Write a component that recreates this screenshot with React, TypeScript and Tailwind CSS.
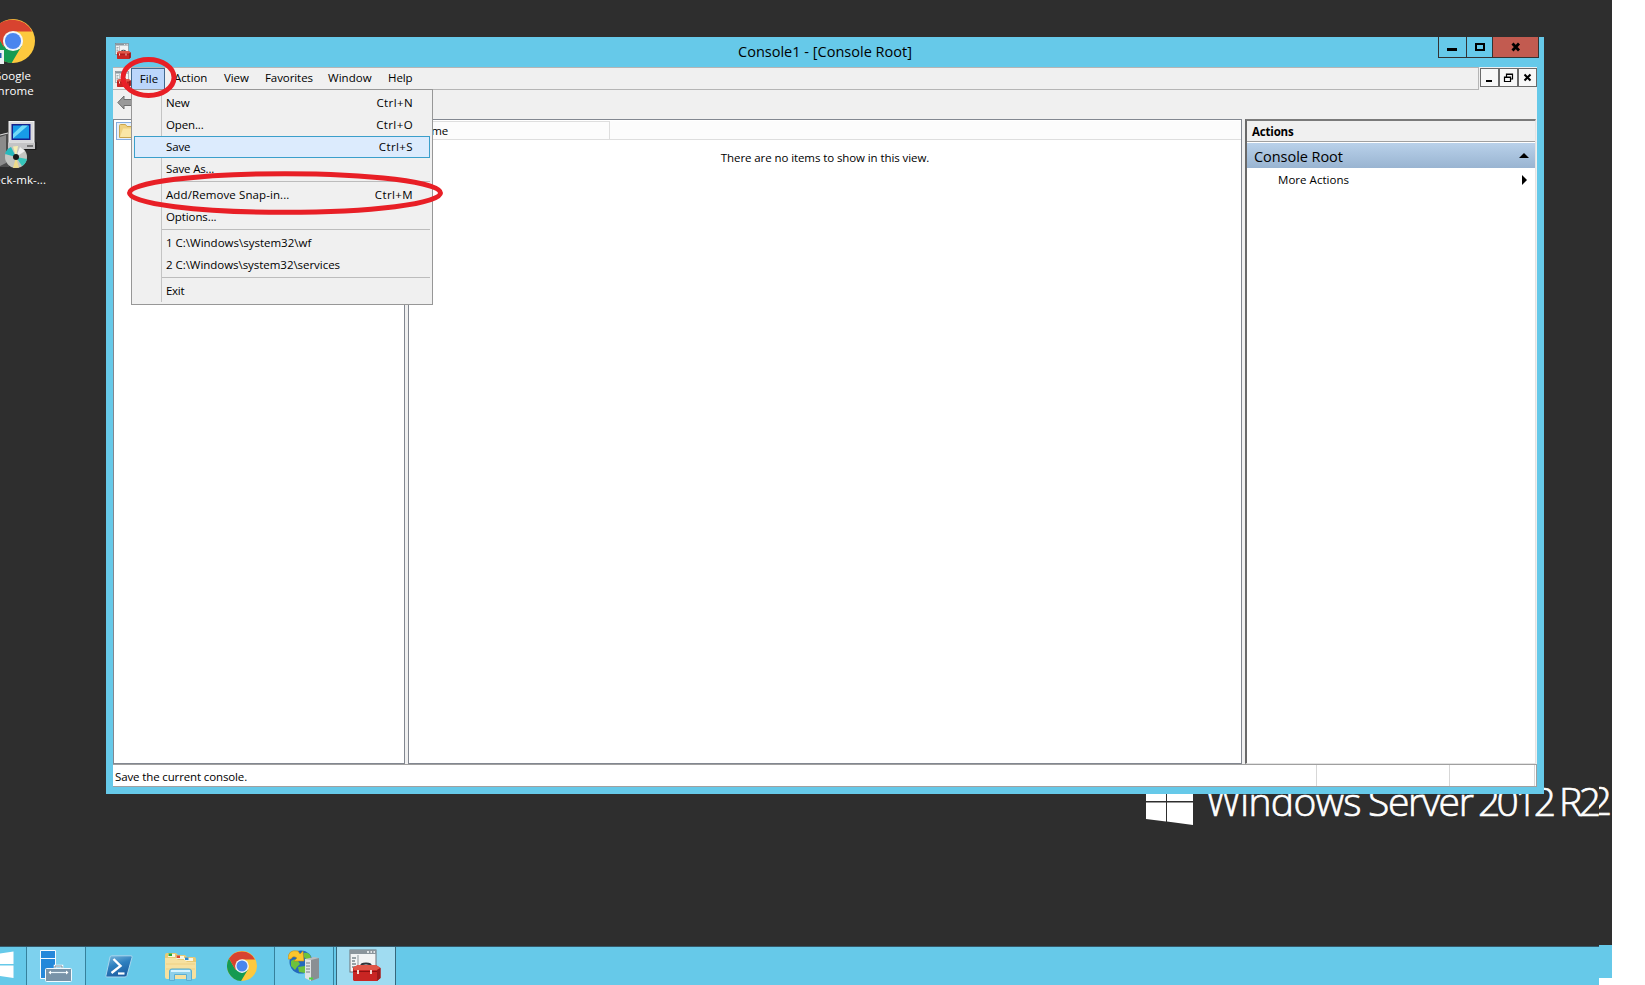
import React from "react";

function ChromeIcon({ className }: { className: string }) {
  return (
    <svg viewBox="0 0 48 48" className={className}>
      <circle cx="24" cy="24" r="24" fill="#fdc93e" />
      <path d="M3.2 12A24 24 0 0 0 22.5 48L33.5 29.5 24 24 13.8 30Z" fill="#159a52" />
      <path d="M3.2 12 13.6 30 24 24 24 13.5H44.8A24 24 0 0 0 3.2 12Z" fill="#d8432f" />
      <circle cx="24" cy="24" r="11" fill="#f4f6f8" />
      <circle cx="24" cy="24" r="8.8" fill="#4a86ee" />
    </svg>
  );
}

function InstallerIcon() {
  return (
    <svg viewBox="0 0 37 48" className="h-12 w-[37px]">
      <path d="M0 14 4 12H9V46H0Z" fill="#4d4d4d" />
      <path d="M0 16 6 14V42L0 45Z" fill="#8b8b8b" />
      <path d="M0 14 8 12" stroke="#dedede" strokeWidth="1" />
      <rect x="9" y="0.5" width="25" height="21" fill="#d9d9dc" stroke="#f4f4f4" />
      <rect x="11.5" y="3" width="19" height="16" fill="#14208c" />
      <rect x="13" y="4.5" width="16" height="13" fill="#179be8" />
      <path d="M13 17.5V13L22 4.500H28Z" fill="#72dcf8" />
      <path d="M8 21.500H35V28H8Z" fill="#c4c4c6" />
      <path d="M27 25H33" stroke="#222" strokeWidth="1" />
      <path d="M36 21V28.500H20" stroke="#161616" fill="none" />
      <circle cx="16" cy="36" r="11" fill="#c3c5c1" />
      <path d="M16 36 5 33A11 11 0 0 1 11 26Z" fill="#26b9bd" />
      <path d="M16 36 27 38A11 11 0 0 1 22 45Z" fill="#36c5bb" />
      <path d="M16 36 13 25.500 18 25Z" fill="#f5eeb2" />
      <path d="M16 36 19 46.700 13 47Z" fill="#eedb8b" />
      <path d="M16 36 20 26 25 30Z" fill="#eeeeee" />
      <circle cx="16" cy="36" r="3" fill="#1a1a1a" />
    </svg>
  );
}

function ConsoleIcon({ className }: { className: string }) {
  return (
    <svg viewBox="0 0 32 32" className={className}>
      <rect x="1" y="1" width="26" height="22" fill="#f2f4f5" stroke="#6c7379" />
      <path d="M1 1H27V5H1Z" fill="#8b959c" />
      <path d="M18 3H20M21.500 3H23M24.500 3H26" stroke="#fff" strokeWidth="1.500" />
      <path d="M9 6V22" stroke="#8e989d" />
      <path d="M3 9H7M3 12H6M3 15H7M3 18H6" stroke="#7b868d" strokeWidth="1.300" />
      <path d="M12 18V17Q12 14.500 17 14.500T22 17V19" stroke="#30343a" strokeWidth="1.800" fill="none" />
      <path d="M4 18.500 9 16H27L31.500 19V29L28 32H5L4 31Z" fill="#c92523" />
      <path d="M4 18.500 9 16H27L31.500 19 28 21H5Z" fill="#e05648" />
      <path d="M4 22.500H28" stroke="#8e1111" />
      <path d="M9 21V25M22 21V25" stroke="#f3d6ce" strokeWidth="2" />
      <path d="M28 21V32L31.500 29V19Z" fill="#9c1a1a" />
    </svg>
  );
}

function ServerManagerIcon() {
  return (
    <svg viewBox="0 0 32 32" className="h-8 w-8">
      <path d="M.5.500H15.500V28.500H.5Z" fill="#2488da" stroke="#f4fbff" />
      <path d="M1 8.500H15" stroke="#f4fbff" />
      <path d="M15 18V16H22V18" stroke="#fff" strokeWidth="2.500" fill="none" />
      <path d="M15 18V16H22V18" stroke="#718ca0" fill="none" />
      <rect x="5.500" y="18.500" width="26" height="13" rx="1" fill="#7893a8" stroke="#f4fbff" />
      <path d="M9 22.500H28" stroke="#e8f4fa" strokeWidth="1.200" />
      <path d="M8.500 22.500 11 20.500V24.500ZM28.500 22.500 26 20.500V24.500Z" fill="#fff" />
    </svg>
  );
}

function PowerShellIcon() {
  return (
    <svg viewBox="0 0 28 23" className="h-[23px] w-7">
      <defs>
        <linearGradient id="ps" x1="0" y1="0" x2="0.400" y2="1">
          <stop offset="0" stopColor="#7cb8dd" />
          <stop offset="0.500" stopColor="#2e80bf" />
          <stop offset="1" stopColor="#1d60a4" />
        </linearGradient>
      </defs>
      <path d="M6.500.800H26Q27.500.800 27 2.500L22 20.500Q21.500 22 20 22H1.800Q.5 22 1 20.500L5 2Q5.300.800 6.500.800Z" fill="url(#ps)" stroke="#a8d6ee" />
      <path d="M8.500 4 15.500 11 6.500 18" stroke="#fff" strokeWidth="2.400" fill="none" />
      <path d="M13 18.500H19.500" stroke="#fff" strokeWidth="2.200" />
    </svg>
  );
}

function ExplorerIcon() {
  return (
    <svg viewBox="0 0 33 29" className="h-[29px] w-[33px]">
      <path d="M1 3Q1 1 3 1H12L14 3H21L23 5H30Q32 5 32 7V25H1Z" fill="#e9ca74" />
      <path d="M4 2H11V5H4Z" fill="#f8f7e6" /><path d="M4.500 1.500H8V4H4.500Z" fill="#26a832" />
      <path d="M12 4H20V7H12Z" fill="#f8f7e6" /><path d="M12.500 3.500H16V6H12.500Z" fill="#d84a31" />
      <path d="M20 6H29V9H20Z" fill="#f8f7e6" /><path d="M21 5.500H24.500V8H21Z" fill="#2d8ad0" />
      <path d="M1 6H12L14 8H21L23 10H32V25Q32 27 30 27H3Q1 27 1 25Z" fill="#f6e1a0" />
      <path d="M2 12H31M2 17H31" stroke="#eed083" />
      <path d="M5.500 28.500V19Q5.500 17 8 17H25Q27.500 17 27.500 19V28.500H22.500V22.500H10.500V28.500Z" fill="#8ed0ea" stroke="#5aaed2" />
      <path d="M7 19H26" stroke="#d7f4ff" strokeWidth="2" />
    </svg>
  );
}

function WebServerIcon() {
  return (
    <svg viewBox="0 0 32 32" className="h-8 w-8">
      <circle cx="13" cy="13" r="11.500" fill="#2469bd" />
      <path d="M3 12Q6 9 10 12L12 15 9 18 7 21 3 17ZM16 4Q21 3 23 8L20 12 16 8ZM10 18 17 17V24L11 23Z" fill="#6cc23c" />
      <path d="M0 10Q0 0 10 2L12 5 15 2 16 12H6L9 9Q5 6 3 10Z" fill="#fbc52d" stroke="#c68c12" strokeWidth=".6" />
      <path d="M17 10 26 8 31 9V29L23 32 17 29Z" fill="#b9bdc0" />
      <path d="M17 10 23 11V32L17 29Z" fill="#e0e3e4" />
      <path d="M18 14H22M18 17H22M18 20H22M18 23H22" stroke="#777d82" />
      <path d="M23 11 31 9V29L23 32Z" fill="#8a8f93" />
      <path d="M21 29.500H25" stroke="#4cd63e" strokeWidth="2" />
    </svg>
  );
}

function BackArrow() {
  return (
    <svg viewBox="0 0 18 16" className="h-4 w-[18px]">
      <path d="M.8 7.500 7 1V4.500H17V10.500H7V14Z" fill="#999" stroke="#6f6f6f" />
    </svg>
  );
}

function FolderIcon() {
  return (
    <svg viewBox="0 0 18 15" className="h-[15px] w-[18px]">
      <path d="M.5 1.500Q.5.500 1.500.500H6.500L8 2.500H17V13.500H.5Z" fill="#efd181" stroke="#c9a64e" />
      <path d="M4 4.500H17V13H1Z" fill="#fae6a6" />
    </svg>
  );
}

type Entry = { label: string; keys?: string; active?: boolean; spacing?: string } | null;

const fileMenu: Entry[] = [
  { label: "New", keys: "Ctrl+N" },
  { label: "Open...", keys: "Ctrl+O" },
  { label: "Save", keys: "Ctrl+S", active: true },
  { label: "Save As..." },
  null,
  { label: "Add/Remove Snap-in...", keys: "Ctrl+M", spacing: "tracking-[0.1px]" },
  { label: "Options...", spacing: "tracking-[-0.1px]" },
  null,
  { label: "1 C:\\Windows\\system32\\wf", spacing: "tracking-[0px]" },
  { label: "2 C:\\Windows\\system32\\services", spacing: "tracking-[-0.04px]" },
  null,
  { label: "Exit", spacing: "tracking-[-0.3px]" },
];

function FileMenu() {
  return (
    <div className="absolute left-[131px] top-[89px] h-[216px] w-[302px] border border-[#979797] bg-[#f0f0f0] p-0.5">
      <div className="absolute bottom-0.5 left-[29px] top-0.5 w-px bg-[#c4c4c4]" />
      {fileMenu.map((e, i) =>
        e ? (
          <div
            key={i}
            className={
              e.active
                ? "relative flex h-[22px] items-center justify-between border border-[#3b9fcb] bg-[#dcebfd] pl-[31px] pr-[16px]"
                : "relative flex h-[22px] items-center justify-between pl-8 pr-[17px]"
            }
          >
            <span className={e.spacing}>{e.label}</span>
            <span className="tracking-[0.4px]">{e.keys}</span>
          </div>
        ) : (
          <div key={i} className="ml-7 h-1 pt-px">
            <div className="h-px bg-[#bcbcbc]" />
          </div>
        )
      )}
    </div>
  );
}

function MenuBar() {
  return (
    <div className="flex h-[23px] bg-[#f0f0f0]">
      <div className="flex w-[1366px] items-center border-b border-r border-t border-[#b5b5b5]">
        <ConsoleIcon className="ml-0.5 h-4 w-4" />
        <div className="flex h-[22px] w-[34px] items-center justify-center border border-[#41698f] bg-[#bbd6fb] pl-0.5 tracking-[0.1px]">File</div>
        <div className="flex pb-px pl-[9px] tracking-[-0.08px]">
          <span className="w-[50px]">Action</span>
          <span className="w-[41px]">View</span>
          <span className="w-[63px]">Favorites</span>
          <span className="w-[60px] tracking-[0.05px]">Window</span>
          <span>Help</span>
        </div>
      </div>
      <div className="ml-px mt-px flex h-[19px]">
        <div className="w-[19px] border border-[#6b6b6b] bg-[#f7f7f7]">
          <svg viewBox="0 0 17 17" className="size-[17px]"><path d="M5 12H11" stroke="#000" strokeWidth="2" /></svg>
        </div>
        <div className="w-[19px] border border-[#6b6b6b] bg-[#f7f7f7]">
          <svg viewBox="0 0 17 17" className="size-[17px]"><path d="M6.500 8V5H12.500V10H10.500M6 5.500H13M4.500 8H10.500V12.500H4.500ZM4 8.500H11" fill="none" stroke="#000" strokeWidth="1.200" /></svg>
        </div>
        <div className="w-[19px] border border-[#6b6b6b] bg-[#f7f7f7]">
          <svg viewBox="0 0 17 17" className="size-[17px]"><path d="M5.500 5.500 11.500 11.500M11.500 5.500 5.500 11.500" stroke="#000" strokeWidth="2" /></svg>
        </div>
      </div>
    </div>
  );
}

function TitleBar() {
  return (
    <div className="relative flex h-[30px]">
      <ConsoleIcon className="ml-[9px] mt-[6px] h-4 w-4" />
      <div className="ml-[607px] mt-[5px] w-[190px] text-[14.5px] leading-[20px] tracking-[0.01px]">Console1 - [Console Root]</div>
      <div className="absolute right-[5px] top-0 flex h-[21px] border-b border-[#333]">
        <div className="w-7 border-l border-[#333]">
          <svg viewBox="0 0 27 20" className="h-5 w-[27px]"><path d="M8 12.500H18" stroke="#000" strokeWidth="3" /></svg>
        </div>
        <div className="w-[26px] border-l border-[#333]">
          <svg viewBox="0 0 25 20" className="h-5 w-[25px]"><rect x="9" y="7" width="8" height="6" fill="none" stroke="#000" strokeWidth="2" /></svg>
        </div>
        <div className="w-[47px] border-x border-[#333] bg-[#c25b50]">
          <svg viewBox="0 0 45 20" className="h-5 w-[45px]"><path d="M19.500 6.500 26 13.500M26 6.500 19.500 13.500" stroke="#000" strokeWidth="2.800" /></svg>
        </div>
      </div>
    </div>
  );
}

function ConsoleWindow() {
  return (
    <div className="absolute left-[106px] top-[37px] flex h-[757px] w-[1438px] flex-col bg-[#66c9e9]">
      <TitleBar />
      <div className="mx-[7px] flex h-[720px] flex-col bg-[#f0f0f0]">
        <MenuBar />
        <div className="h-[29px] pl-1 pt-[5px]"><BackArrow /></div>
        <div className="flex h-[645px]">
          <div className="w-[292px] border border-[#828790] bg-white p-0.5">
            <div className="h-[18px] w-20 border border-[#84acdd] bg-[#e6effb] pl-0.5 pt-px"><FolderIcon /></div>
          </div>
          <div className="ml-[3px] w-[834px] border border-[#828790] bg-white">
            <div className="mt-px flex h-[19px] border-b border-[#dedede] bg-[#fcfcfc]">
              <div className="w-[201px] border-r border-t border-[#dedede] pl-[7px] leading-[18px] tracking-[0.05px]">Name</div>
            </div>
            <div className="pt-[10px] text-center leading-[16px] tracking-[-0.09px]">There are no items to show in this view.</div>
          </div>
          <div className="ml-[3px] w-[291px] border-b border-l-2 border-r border-t-2 border-b-[#e3e3e3] border-l-[#696969] border-r-[#e3e3e3] border-t-[#7a7a7a] bg-white">
            <div className="h-[21px] border-b border-[#a0a0a0] bg-[#f0f0f0] pl-[5px] font-bold leading-[21px] tracking-[-0.18px]">Actions</div>
            <div className="mt-px flex h-[25px] items-center justify-between bg-linear-to-b from-[#b9d1ea] to-[#99b4d1] pl-[7px] pr-[6px]">
              <span className="pt-0.5 text-[14.5px] tracking-[-0.05px]">Console Root</span>
              <svg viewBox="0 0 10 5" className="h-[5px] w-[10px]"><path d="M0 5 5 0 10 5Z" /></svg>
            </div>
            <div className="flex h-[23px] items-center justify-between pl-[31px] pr-2">
              <span className="tracking-[0.04px]">More Actions</span>
              <svg viewBox="0 0 5 10" className="h-[10px] w-[5px]"><path d="M0 0 5 5 0 10Z" /></svg>
            </div>
          </div>
        </div>
        <div className="flex h-[23px] border-b border-r border-t border-[#a0a0a0] bg-white">
          <div className="w-[1204px] border-r border-[#d7d7d7] pl-[2px] leading-[23px] tracking-[-0.13px]">Save the current console.</div>
          <div className="w-[133px] border-r border-[#d7d7d7]" />
          <div className="w-[85px] border-r border-[#d7d7d7]" />
        </div>
      </div>
    </div>
  );
}

function Wordmark() {
  return (
    <div className="absolute left-[1206px] top-[774px] flex w-[393px] overflow-hidden whitespace-nowrap text-[39px] font-light leading-[54px] text-white [-webkit-text-stroke:0.7px_white]">
      <span className="w-[162px] shrink-0 tracking-[-0.6px]">Windows</span>
      <span className="w-[110px] shrink-0 tracking-[-1.3px]">Server</span>
      <span className="w-[81px] shrink-0 tracking-[-3.7px]">2012</span>
      <span className="shrink-0 tracking-[-3.5px]">R2</span>
    </div>
  );
}

function Taskbar() {
  return (
    <div className="flex h-[38px] w-[1599px] bg-[#66c9e9]">
      <div className="w-[26px] pt-[4px]">
        <svg viewBox="0 0 14 28" className="h-7 w-[14px]">
          <path d="M0 2.500 13.500.500V13H0ZM0 14.500H13.500V27L0 25Z" fill="#fff" />
        </svg>
      </div>
      <div className="flex w-[60px] justify-center border-x border-[#36819c] bg-[#7dd1ee] pt-[3px]"><ServerManagerIcon /></div>
      <div className="ml-[19px] mt-[8px] w-[59px]"><PowerShellIcon /></div>
      <div className="mt-[5px] w-[63px]"><ExplorerIcon /></div>
      <div className="mt-1 w-[47px]"><ChromeIcon className="h-[30px] w-[30px]" /></div>
      <div className="flex w-[60px] border-x border-[#36819c] bg-[#72cdec] pl-[13px] pt-[2px]"><WebServerIcon /></div>
      <div className="ml-0.5 flex w-[60px] border-x border-[#36687c] bg-[#a0dcf1] pl-3 pt-[2px]"><ConsoleIcon className="h-8 w-8" /></div>
    </div>
  );
}

export default function App() {
  return (
    <div className="relative h-[985px] w-[1645px] overflow-hidden bg-white font-['Open_Sans','Noto_Sans',sans-serif] text-[11.5px] tracking-[-0.15px] text-black">
      <div className="relative h-[947px] w-[1612px] overflow-hidden bg-[#2e2e2e]">
        <div className="absolute -left-[9px] top-[19px]"><ChromeIcon className="h-11 w-11" /></div>
        <svg viewBox="0 0 4 14" className="absolute left-0 top-[50px] h-[14px] w-1"><path d="M0 0H4V14H0Z" fill="#edf0f3" /><path d="M0 3H1.500V8H0Z" fill="#285cad" /></svg>
        <div className="absolute -left-[18px] top-[68px] w-[60px] text-center leading-[15px] tracking-[0.05px] text-white">
          <div>Google</div>
          <div>Chrome</div>
        </div>
        <div className="absolute left-0 top-[121px]"><InstallerIcon /></div>
        <div className="absolute -left-[24px] top-[172px] w-[70px] whitespace-nowrap text-right leading-[15px] tracking-[0.05px] text-white">check-mk-...</div>
        <svg viewBox="0 0 47 56" className="absolute left-[1146px] top-[769px] h-14 w-[47px]">
          <path d="M0 6 20 4V32H0ZM21 4 47 0V32H21ZM0 33.500H20V52.500L0 50ZM21 33.500H47V56L21 52.600Z" fill="#fff" />
        </svg>
        <Wordmark />
        <div className="absolute left-[1599px] top-[773px] flex w-[13px] justify-end overflow-hidden text-[39px] font-light leading-[54px] tracking-normal text-white [-webkit-text-stroke:0.7px_white]">2</div>
        <div className="absolute left-[1599px] top-[945px] h-0.5 w-[13px] bg-[#66c9e9]" />
        <div className="absolute bottom-0 left-0 h-px w-[1599px] bg-[#34596a]" />
      </div>
      <div className="flex">
        <Taskbar />
        <div className="h-[31px] w-[13px] bg-[#66c9e9]" />
      </div>
      <ConsoleWindow />
      <FileMenu />
      <svg viewBox="0 0 340 170" className="pointer-events-none absolute left-[115px] top-[50px] h-[170px] w-[340px]" fill="none" stroke="#e81f26" strokeWidth="5">
        <ellipse cx="33.500" cy="27.500" rx="25.500" ry="18" />
        <ellipse cx="170" cy="143" rx="155.500" ry="19.300" />
      </svg>
    </div>
  );
}
